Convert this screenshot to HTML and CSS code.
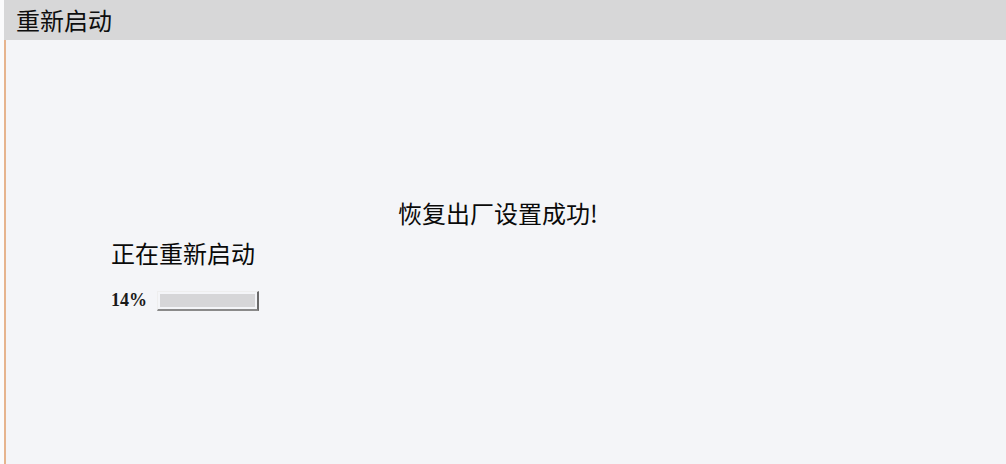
FILE: index.html
```html
<!DOCTYPE html>
<html lang="zh">
<head>
<meta charset="utf-8">
<link rel="stylesheet" href="styles.css">
</head>
<body>
<div class="page">
  <div class="header">重新启动</div>
  <div class="content">
    <div class="success">恢复出厂设置成功!</div>
    <div class="reboot">
      <div class="reboot-title">正在重新启动</div>
      <div class="progress-row">
        <span class="pct">14%</span>
        <span class="bar"><span class="fill"></span></span>
      </div>
    </div>
  </div>
</div>
</body>
</html>
```
FILE: styles.css
```css
html, body {
  margin: 0;
  padding: 0;
  background: #fbfbfc;
}
.page {
  width: 1006px;
  height: 464px;
  padding-left: 4px;
  box-sizing: border-box;
  display: flex;
  flex-direction: column;
  font-family: "Noto Sans CJK SC", "Noto Sans", sans-serif;
  color: #0a0a0a;
}
.header {
  height: 40px;
  box-sizing: border-box;
  background: #d7d7d8;
  padding-left: 12px;
  padding-top: 1px;
  font-size: 24px;
  line-height: 38px;
  color: #0e0e0e;
}
.content {
  flex: 1;
  background: #f4f5f8;
  border-left: 2px solid #e6b48e;
  display: flex;
  flex-direction: column;
  padding-top: 156px;
}
.success {
  font-size: 24px;
  line-height: 34px;
  padding-left: 392px;
}
.reboot {
  padding-left: 105px;
  padding-top: 6px;
}
.reboot-title {
  font-size: 24px;
  line-height: 34px;
}
.progress-row {
  display: flex;
  align-items: center;
  gap: 9px;
  margin-top: 20px;
}
.pct {
  font-family: "Liberation Serif", "DejaVu Serif", serif;
  font-size: 18px;
  font-weight: bold;
  width: 37px;
  color: #1a1a1a;
}
.bar {
  display: block;
  width: 102px;
  height: 20px;
  box-sizing: border-box;
  border-right: 2px solid #6a6a6a;
  border-bottom: 2px solid #8a8a8a;
  border-top: 1px solid #eeeeee;
  border-left: 1px solid #eeeeee;
  padding: 2px;
}
.fill {
  display: block;
  width: 100%;
  height: 100%;
  background: #d6d6d8;
}
```
